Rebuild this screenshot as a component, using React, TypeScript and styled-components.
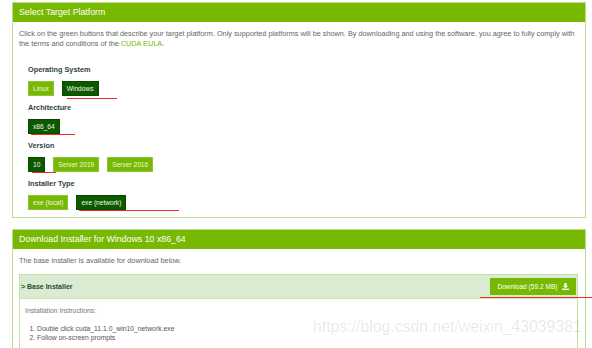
import styled, { createGlobalStyle } from 'styled-components';

const green = '#76b900';
const darkGreen = '#0c5a00';

type Mark = { left: number; width: number; top: number };

const platformGroups: {
  label: string;
  options: { name: string; selected?: boolean; mark?: Mark }[];
}[] = [
  {
    label: 'Operating System',
    options: [
      { name: 'Linux' },
      { name: 'Windows', selected: true, mark: { left: 5, width: 50, top: 2 } },
    ],
  },
  {
    label: 'Architecture',
    options: [{ name: 'x86_64', selected: true, mark: { left: 3, width: 44, top: 0 } }],
  },
  {
    label: 'Version',
    options: [
      { name: '10', selected: true, mark: { left: 4, width: 24, top: 0 } },
      { name: 'Server 2019' },
      { name: 'Server 2016' },
    ],
  },
  {
    label: 'Installer Type',
    options: [
      { name: 'exe (local)' },
      { name: 'exe (network)', selected: true, mark: { left: 3, width: 100, top: 0 } },
    ],
  },
];

function DownloadIcon() {
  return (
    <svg width="7" height="7" viewBox="0 0 10 10" fill="#fff">
      <path d="M3.5 0h3v4h2.2L5 7.6 1.3 4h2.2z" />
      <path d="M0 8h10v2H0z" />
    </svg>
  );
}

function App() {
  return (
    <Page>
      <GlobalStyle />
      <Panel>
        <PanelHeader>Select Target Platform</PanelHeader>
        <PanelBody>
          <Intro>
            Click on the green buttons that describe your target platform. Only supported
            platforms will be shown. By downloading and using the software, you agree to fully
            comply with the terms and conditions of the <Link>CUDA EULA</Link>.
          </Intro>
          <Selector>
            {platformGroups.map((group) => (
              <Group key={group.label}>
                <GroupLabel>{group.label}</GroupLabel>
                <ButtonRow>
                  {group.options.map((opt) => (
                    <OptionButton key={opt.name} $selected={!!opt.selected}>
                      {opt.name}
                      {opt.mark && <RedMark $mark={opt.mark} />}
                    </OptionButton>
                  ))}
                </ButtonRow>
              </Group>
            ))}
          </Selector>
        </PanelBody>
      </Panel>

      <Panel>
        <PanelHeader>Download Installer for Windows 10 x86_64</PanelHeader>
        <PanelBody>
          <Intro>The base installer is available for download below.</Intro>
          <InstallerBox>
            <InstallerHead>
              <InstallerTitle>
                <Chevron>&gt;</Chevron>Base Installer
              </InstallerTitle>
              <DownloadButton>
                Download (59.2 MB) <DownloadIcon />
                <RedMark $mark={{ left: -10, width: 112, top: 2 }} />
              </DownloadButton>
            </InstallerHead>
            <InstallerBody>
              <Instructions>Installation Instructions:</Instructions>
              <Steps>
                <li>Double click cuda_11.1.0_win10_network.exe</li>
                <li>Follow on-screen prompts</li>
              </Steps>
            </InstallerBody>
          </InstallerBox>
        </PanelBody>
      </Panel>
      <Watermark>https://blog.csdn.net/weixin_43039381</Watermark>
    </Page>
  );
}

const GlobalStyle = createGlobalStyle`
  body {
    margin: 0;
    background: #fff;
    font-family: "Liberation Sans", Arial, sans-serif;
    overflow: hidden;
  }
`;

const Page = styled.div`
  position: relative;
  width: 592px;
  height: 348px;
  overflow: hidden;
  padding: 2px 6px 0 12px;
  box-sizing: border-box;
  display: flex;
  flex-direction: column;
  gap: 11px;
`;

const Panel = styled.section`
  border: 1px solid #bcdc8e;
  flex-shrink: 0;
`;

const PanelHeader = styled.div`
  height: 19px;
  background: ${green};
  color: #fff;
  font-size: 8.8px;
  line-height: 19px;
  padding-left: 6px;
`;

const PanelBody = styled.div`
  padding: 7px 7px 7px 6px;
`;

const Intro = styled.p`
  margin: 0;
  font-size: 7.3px;
  line-height: 10px;
  color: #666;
`;

const Link = styled.span`
  color: ${green};
`;

const Selector = styled.div`
  padding: 16px 0 0 9px;
  display: flex;
  flex-direction: column;
  gap: 7px;
`;

const Group = styled.div`
  display: flex;
  flex-direction: column;
  gap: 6px;
`;

const GroupLabel = styled.div`
  font-size: 7.3px;
  line-height: 10px;
  font-weight: bold;
  color: #2f3f3f;
`;

const ButtonRow = styled.div`
  display: flex;
  gap: 8px;
`;

const OptionButton = styled.div<{ $selected: boolean }>`
  position: relative;
  height: 15px;
  line-height: 15px;
  padding: 0 5px;
  font-size: 6.6px;
  color: #eef7e0;
  background: ${(p) => (p.$selected ? darkGreen : green)};
  box-shadow: inset 0 0 0 1px ${(p) => (p.$selected ? '#0a4a00' : '#8cc63f')};
`;

const RedMark = styled.span<{ $mark: Mark }>`
  position: absolute;
  left: ${(p) => p.$mark.left}px;
  top: calc(100% + ${(p) => p.$mark.top}px);
  width: ${(p) => p.$mark.width}px;
  height: 1px;
  background: #e8302a;
`;

const InstallerBox = styled.div`
  margin-top: 8px;
  border: 1px solid #c4e0a6;
  height: 120px;
`;

const InstallerHead = styled.div`
  height: 23px;
  background: #d9ecd1;
  display: flex;
  align-items: center;
  justify-content: space-between;
  padding-right: 1px;
  border-bottom: 1px solid #c9e3b4;
`;

const InstallerTitle = styled.div`
  font-size: 7px;
  font-weight: bold;
  color: #2e4a2e;
  display: flex;
  align-items: center;
`;

const Chevron = styled.span`
  color: #1d6a1d;
  font-weight: bold;
  font-size: 8px;
  width: 6px;
  text-align: center;
  margin-right: 1px;
`;

const DownloadButton = styled.div`
  position: relative;
  height: 17px;
  width: 86px;
  box-sizing: border-box;
  background: ${green};
  color: #fff;
  font-size: 6.6px;
  display: flex;
  align-items: center;
  justify-content: center;
  gap: 4px;
`;

const InstallerBody = styled.div`
  padding: 7px 0 0 5px;
  color: #777;
  font-size: 6.8px;
`;

const Instructions = styled.div`
  line-height: 10px;
`;

const Steps = styled.ol`
  margin: 8px 0 0;
  padding-left: 12px;
  color: #555;
  line-height: 9px;
`;

const Watermark = styled.div`
  position: absolute;
  left: 313px;
  top: 317px;
  font-size: 15.8px;
  line-height: 20px;
  color: rgba(0, 0, 0, 0.1);
  pointer-events: none;
  white-space: nowrap;
`;

export default App;
